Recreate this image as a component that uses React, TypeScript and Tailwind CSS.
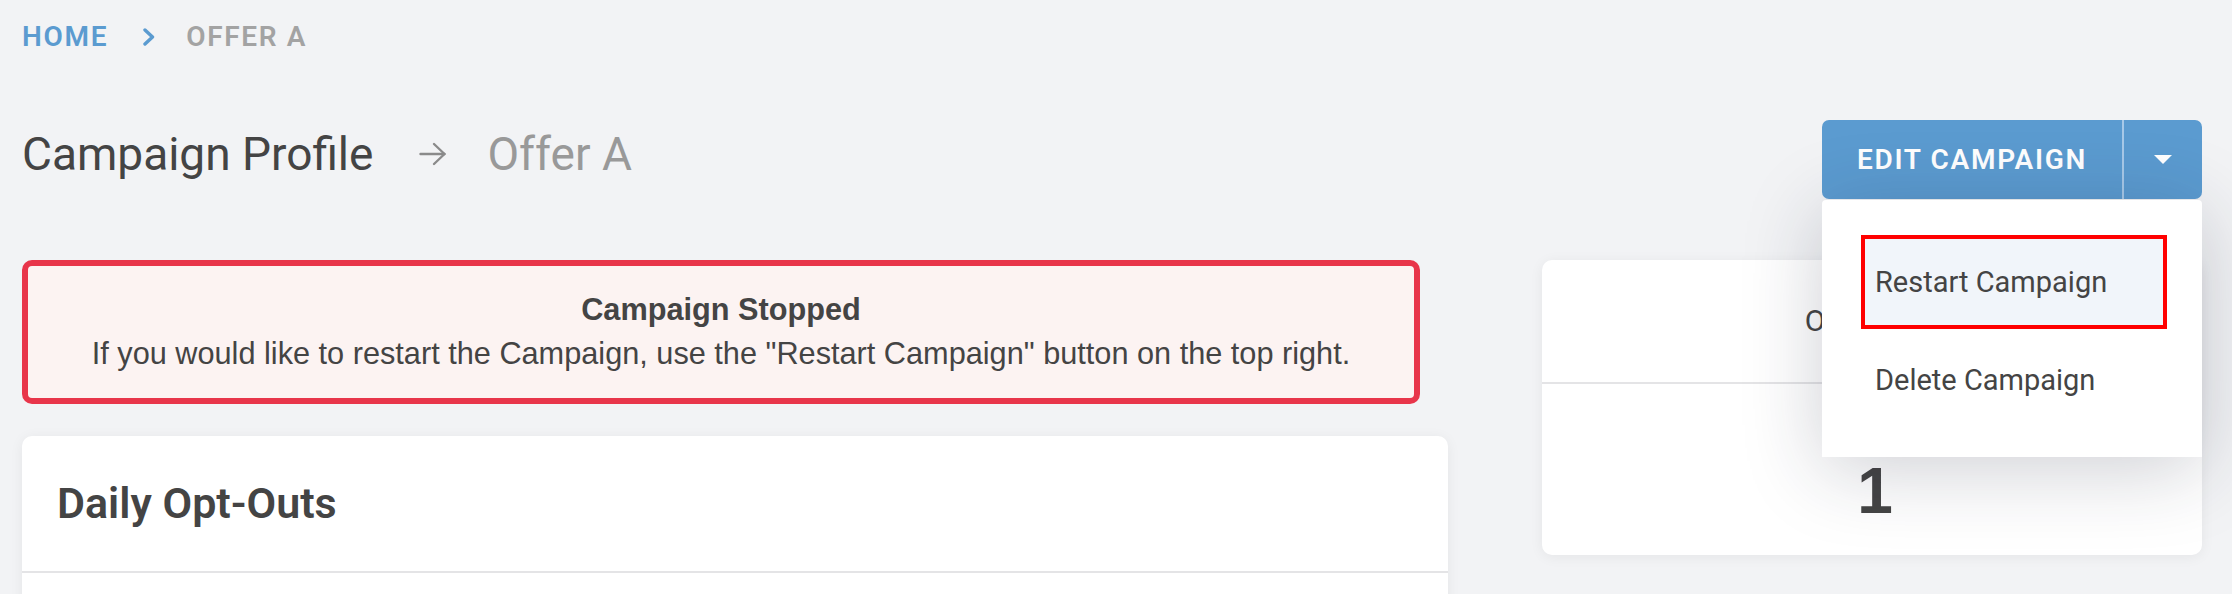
import React from "react";

const ChevronRight = () => (
  <svg width="14" height="18" viewBox="0 0 14 18" className="shrink-0">
    <polyline points="3,2 10.5,9 3,16" fill="none" stroke="#5b9bd0" strokeWidth="3.4" strokeLinecap="round" strokeLinejoin="round" />
  </svg>
);

const ArrowRight = () => (
  <svg width="28" height="24" viewBox="0 0 28 24" className="shrink-0">
    <line x1="1.5" y1="12" x2="25.5" y2="12" stroke="#8a8a8a" strokeWidth="2.4" strokeLinecap="round" />
    <polyline points="15,2 25.5,12 15,22" fill="none" stroke="#8a8a8a" strokeWidth="2.4" strokeLinecap="round" strokeLinejoin="round" />
  </svg>
);

const Caret = () => (
  <svg width="18" height="9" viewBox="0 0 18 9">
    <polygon points="0,0 18,0 9,9" fill="#ffffff" />
  </svg>
);

function EditCampaignButton() {
  return (
    <div className="relative">
      <div className="flex h-[79px] w-[380px] rounded-[7px] bg-[#5b9bd0] text-white">
        <div className="flex w-[300px] items-center justify-center text-[28px] font-semibold uppercase leading-none tracking-[0.06em]">
          Edit Campaign
        </div>
        <div className="w-[2px] bg-[#a7c9e8]" />
        <div className="flex flex-1 items-center justify-center">
          <Caret />
        </div>
      </div>

      {/* dropdown opened */}
      <div className="absolute left-0 right-0 top-full mt-px h-[257px] rounded-t-[4px] bg-white pt-[35px] shadow-[0_12px_80px_rgba(30,35,60,0.22)]">
        <div className="ml-[39px] mr-[35px] flex h-[94px] items-center border-4 border-[#ff0000] bg-[#f1f5fa] pl-[10px] text-[29px] leading-none text-[#444]">
          Restart Campaign
        </div>
        <div className="mt-[4px] flex h-[94px] items-center pl-[53px] text-[29px] leading-none text-[#444]">
          Delete Campaign
        </div>
      </div>
    </div>
  );
}

export default function App() {
  return (
    <div className="min-h-screen bg-[#f2f3f5] pl-[22px] pr-[30px] pt-[23px] font-['Roboto',sans-serif] text-[#444]">
      {/* breadcrumb */}
      <nav className="flex h-[28px] items-center text-[28px] font-semibold uppercase leading-none tracking-[0.06em]">
        <span className="text-[#5b9bd0]">Home</span>
        <span className="ml-[34px]">
          <ChevronRight />
        </span>
        <span className="ml-[30px] text-[#a3a3a3]">Offer A</span>
      </nav>

      {/* header */}
      <div className="mt-[69px] flex items-start justify-between">
        <div className="mt-[11px] flex items-center">
          <h1 className="text-[46px] font-normal leading-none text-[#444]">Campaign Profile</h1>
          <span className="ml-[46px]">
            <ArrowRight />
          </span>
          <span className="ml-[40px] text-[46px] leading-none text-[#999]">Offer A</span>
        </div>
        <EditCampaignButton />
      </div>

      {/* content */}
      <div className="mt-[61px] flex items-start">
        <div className="w-[1426px] shrink-0">
          <div className="w-[1398px] rounded-[10px] border-[6px] border-[#e8354a] bg-[#fcf3f2] py-[22px] text-center font-['Liberation_Sans',Arial,sans-serif] text-[30.7px] leading-[44px] text-[#444]">
            <div className="font-bold">Campaign Stopped</div>
            <div>If you would like to restart the Campaign, use the "Restart Campaign" button on the top right.</div>
          </div>

          <div className="mt-[32px] rounded-[10px] bg-white shadow-[0_2px_14px_rgba(0,0,0,0.06)]">
            <div className="flex h-[137px] items-center border-b-2 border-[#e4e4e6] px-[35px]">
              <h2 className="text-[43px] font-semibold leading-none text-[#444]">Daily Opt-Outs</h2>
            </div>
            <div className="h-[320px]" />
          </div>
        </div>

        <div className="ml-[94px] w-[660px] shrink-0 rounded-[10px] bg-white shadow-[0_2px_14px_rgba(0,0,0,0.06)]">
          <div className="flex h-[124px] items-center justify-center border-b-2 border-[#e4e4e6] text-[30px] leading-none text-[#444]">
            Opted Out
          </div>
          <div className="h-[171px] pl-[6px] pt-[75px] text-center font-['Liberation_Sans',Arial,sans-serif] text-[64px] font-bold leading-none text-[#444]">
            1
          </div>
        </div>
      </div>
    </div>
  );
}
